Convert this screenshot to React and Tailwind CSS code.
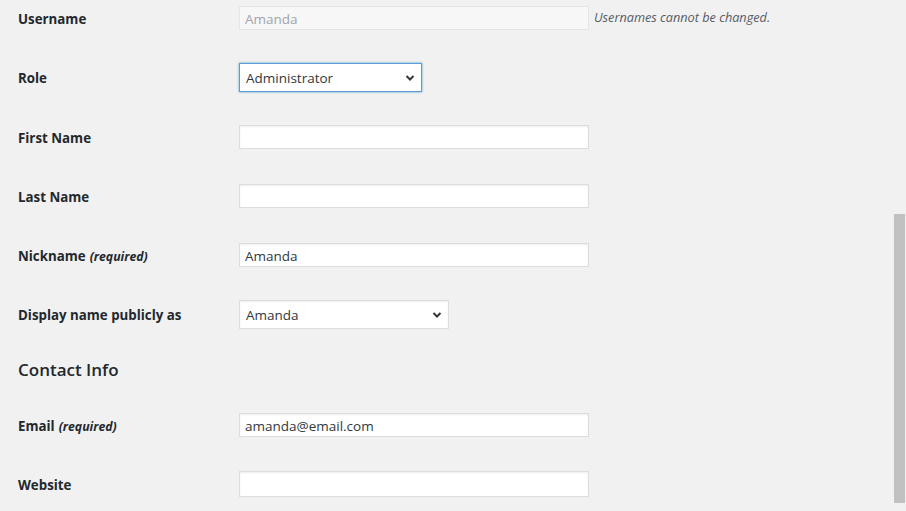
const font = { fontFamily: '"Open Sans", "Noto Sans", sans-serif' };

function Chevron() {
  return (
    <svg
      className="pointer-events-none absolute right-[7px] top-1/2 -translate-y-1/2"
      width="10"
      height="7"
      viewBox="0 0 10 7"
      fill="none"
    >
      <path d="M1.5 1.5 5 5l3.5-3.5" stroke="#32373c" strokeWidth="2" />
    </svg>
  );
}

function Label({ children, req }) {
  return (
    <div className="w-[221px] shrink-0 pt-[3px] text-[13.3px] font-bold text-[#23282d]">
      {children}
      {req && <em className="ml-[4px] text-[12.3px] font-bold">(required)</em>}
    </div>
  );
}

function TextInput({ value, tall }) {
  return (
    <input
      type="text"
      defaultValue={value}
      className={`w-[350px] border border-[#dddddd] bg-white px-[5px] pt-[1px] text-[13.5px] text-[#32373c] shadow-[inset_0_1px_2px_rgba(0,0,0,0.07)] outline-none ${
        tall ? "h-[26px]" : "h-[24px]"
      }`}
      style={font}
    />
  );
}

function Select({ value, width, focused }) {
  return (
    <div className="relative" style={{ width }}>
      <select
        defaultValue={value}
        className={`h-[29px] w-full appearance-none border bg-white pl-[6px] pt-[1px] text-[13.5px] text-[#32373c] outline-none ${
          focused
            ? "border-[#5b9dd9] shadow-[0_0_2px_rgba(30,140,190,0.8)]"
            : "border-[#dddddd] shadow-[inset_0_1px_2px_rgba(0,0,0,0.07)]"
        }`}
        style={font}
      >
        <option>{value}</option>
      </select>
      <Chevron />
    </div>
  );
}

export default function App() {
  return (
    <div
      className="relative h-[511px] w-[906px] overflow-hidden bg-[#f1f1f1] pl-[18px]"
      style={font}
    >
      <div className="mt-[5px] flex h-[26px] items-center">
        <Label>Username</Label>
        <input
          type="text"
          readOnly
          defaultValue="Amanda"
          className="h-[24px] w-[350px] border border-[#e5e5e5] bg-[#f7f7f7] px-[5px] pt-[1px] text-[13.5px] text-[#a0a5aa] outline-none"
          style={font}
        />
        <span className="ml-[5px] text-[12.7px] italic text-[#555d66]">
          Usernames cannot be changed.
        </span>
      </div>

      <div className="mt-[32px] flex h-[29px] items-center">
        <Label>Role</Label>
        <Select value="Administrator" width={183} focused />
      </div>

      <div className="mt-[33px] flex h-[24px] items-center">
        <Label>First Name</Label>
        <TextInput value="" />
      </div>

      <div className="mt-[35px] flex h-[24px] items-center">
        <Label>Last Name</Label>
        <TextInput value="" />
      </div>

      <div className="mt-[35px] flex h-[24px] items-center">
        <Label req>Nickname</Label>
        <TextInput value="Amanda" />
      </div>

      <div className="mt-[33px] flex h-[29px] items-center">
        <Label>Display name publicly as</Label>
        <Select value="Amanda" width={210} />
      </div>

      <h2 className="mt-[28px] flex h-[26px] items-center text-[17px] font-semibold text-[#23282d]">
        Contact Info
      </h2>

      <div className="mt-[30px] flex h-[24px] items-center">
        <Label req>Email</Label>
        <TextInput value="amanda@email.com" />
      </div>

      <div className="mt-[34px] flex h-[26px] items-center">
        <Label>Website</Label>
        <TextInput value="" tall />
      </div>

      <div className="absolute right-[1px] top-[214px] h-[289px] w-[11px] bg-[#c1c1c1]" />
    </div>
  );
}
